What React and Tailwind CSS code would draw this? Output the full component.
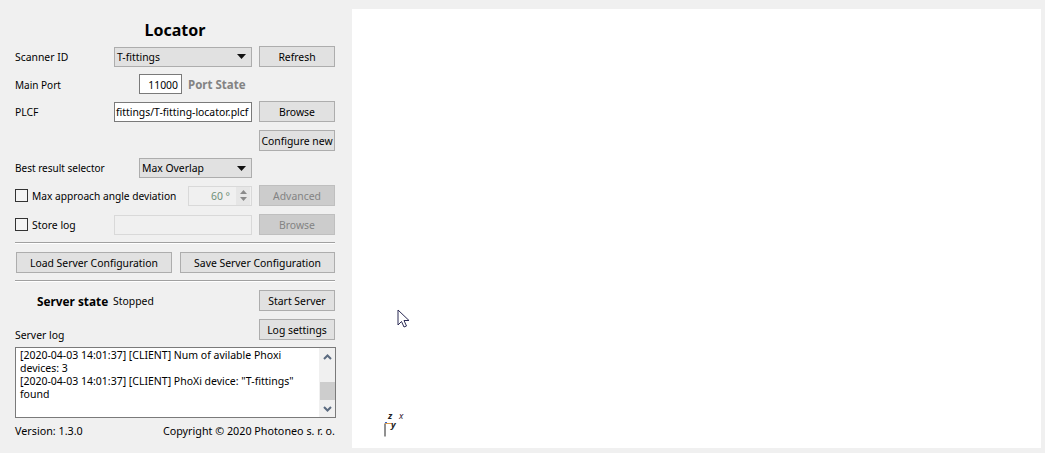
function Btn({ children, disabled, className = "w-[76px]" }) {
  return (
    <div className={`h-[21px] flex items-center justify-center border shrink-0 whitespace-nowrap ${className} ${disabled ? "bg-[#cccccc] border-[#bfbfbf] text-[#838383]" : "bg-[#e1e1e1] border-[#adadad] text-black"}`}>
      {children}
    </div>
  );
}

function Combo({ children, className }) {
  return (
    <div className={`h-[20px] flex items-center justify-between bg-[#e1e1e1] border border-[#adadad] pl-[2px] pr-[5px] shrink-0 ${className}`}>
      <span>{children}</span>
      <svg width="9" height="5" viewBox="0 0 9 5"><path d="M0 0h9L4.5 5z" fill="#111" /></svg>
    </div>
  );
}

function Check({ children, className }) {
  return (
    <div className={`flex items-center gap-[4px] shrink-0 whitespace-nowrap ${className}`}>
      <div className="w-[13px] h-[13px] border border-[#333333] bg-[#f4f4f4]" />
      <span>{children}</span>
    </div>
  );
}

function Sep({ className }) {
  return <div className={`h-[2px] w-[320px] border-t border-[#a0a0a0] bg-white ${className}`} />;
}

function Chevron({ up }) {
  return (
    <svg width="9" height="6" viewBox="0 0 9 6" fill="none" stroke="#5b6b80" strokeWidth="2">
      <path d={up ? "M1 5l3.5-3.5L8 5" : "M1 1l3.5 3.5L8 1"} />
    </svg>
  );
}

export default function App() {
  return (
    <div className="w-[1045px] h-[453px] bg-[#f0f0f0] flex overflow-hidden text-[10.4px] leading-[14px] text-black" style={{ fontFamily: '"Noto Sans", Tahoma, sans-serif' }}>
      <div className="w-[352px] shrink-0 pl-[15px] flex flex-col">
        <div className="h-[46px] w-[320px] pt-[20px] text-center text-[16px] leading-[20px] font-bold">Locator</div>

        <div className="flex items-center h-[21px] gap-[7px]">
          <span className="w-[92px]">Scanner ID</span>
          <Combo className="w-[138px]">T-fittings</Combo>
          <Btn>Refresh</Btn>
        </div>

        <div className="flex items-center h-[20px] mt-[7px]">
          <span className="w-[124px] pt-[1px] text-[10px]">Main Port</span>
          <div className="w-[43px] h-[20px] bg-white border border-[#7a7a7a] flex items-center justify-end pr-[3px] pt-[1px]">11000</div>
          <span className="ml-[6px] pt-[1px] font-bold text-[#838383] text-[11.5px]">Port State</span>
        </div>

        <div className="flex items-center h-[21px] mt-[7px] gap-[7px]">
          <span className="w-[92px]">PLCF</span>
          <div className="w-[138px] h-[20px] bg-white border border-[#7a7a7a] flex items-center pl-[1px] whitespace-nowrap">fittings/T-fitting-locator.plcf</div>
          <Btn>Browse</Btn>
        </div>

        <div className="flex mt-[8px] pl-[244px]">
          <Btn>Configure new</Btn>
        </div>

        <div className="flex items-center h-[20px] mt-[7px]">
          <span className="w-[124px] text-[10px]">Best result selector</span>
          <Combo className="w-[113px]">Max Overlap</Combo>
        </div>

        <div className="flex items-center h-[21px] mt-[7px] gap-[7px]">
          <Check className="w-[166px] text-[10.2px]">Max approach angle deviation</Check>
          <div className="w-[64px] h-[20px] border border-[#d9d9d9] flex items-center justify-end text-[#6f8f78] shrink-0">
            <span className="mr-[6px]">60 °</span>
            <div className="w-[14px] h-[18px] flex flex-col items-center justify-center gap-[3px] bg-[#e6e6e6] mr-[1px]">
              <svg width="7" height="4" viewBox="0 0 7 4"><path d="M3.5 0L7 4H0z" fill="#8a8a8a" /></svg>
              <svg width="7" height="4" viewBox="0 0 7 4"><path d="M0 0h7L3.5 4z" fill="#8a8a8a" /></svg>
            </div>
          </div>
          <Btn disabled>Advanced</Btn>
        </div>

        <div className="flex items-center h-[21px] mt-[8px] gap-[7px]">
          <Check className="w-[92px]">Store log</Check>
          <div className="w-[138px] h-[20px] border border-[#d9d9d9] bg-[#f0f0f0] shrink-0" />
          <Btn disabled>Browse</Btn>
        </div>

        <Sep className="mt-[7px]" />

        <div className="flex items-center mt-[8px] pl-[1px] gap-[8px]">
          <Btn className="w-[156px]">Load Server Configuration</Btn>
          <Btn className="w-[155px]">Save Server Configuration</Btn>
        </div>

        <Sep className="mt-[7px]" />

        <div className="flex items-center h-[21px] mt-[8px]">
          <span className="ml-[22px] w-[76px] font-bold text-[11.8px]">Server state</span>
          <span className="w-[146px]">Stopped</span>
          <Btn>Start Server</Btn>
        </div>

        <div className="flex items-end h-[21px] mt-[8px] justify-between w-[320px]">
          <span className="mb-[-2px]">Server log</span>
          <Btn>Log settings</Btn>
        </div>

        <div className="w-[321px] h-[71px] mt-[7px] bg-white border border-[#7a7a7a] flex text-[10.5px] leading-[13px]">
          <div className="flex-1 pl-[4px] pt-[1px] pr-[2px]">
            [2020-04-03 14:01:37] [CLIENT] Num of avilable Phoxi devices: 3<br />
            [2020-04-03 14:01:37] [CLIENT] PhoXi device: "T-fittings" found
          </div>
          <div className="w-[16px] bg-[#f0f0f0] flex flex-col items-center shrink-0">
            <div className="h-[17px] flex items-center justify-center"><Chevron up /></div>
            <div className="h-[17px]" />
            <div className="h-[18px] w-[15px] bg-[#cdcdcd]" />
            <div className="flex-1 flex items-center justify-center"><Chevron /></div>
          </div>
        </div>

        <div className="flex justify-between w-[320px] mt-[6px] text-[10.75px]">
          <span>Version: 1.3.0</span>
          <span>Copyright © 2020 Photoneo s. r. o.</span>
        </div>
      </div>

      <div className="relative w-[689px] h-[439px] mt-[9px] bg-white">
        <svg className="absolute left-[45px] top-[300px]" width="14" height="20" viewBox="0 0 14 20">
          <path d="M1 1v15l3.5-3.5 2.5 5.5 2.5-1-2.5-5.5H12z" fill="#fff" stroke="#2b2b55" strokeWidth="1" />
        </svg>
        <svg className="absolute left-[30px] top-[392px]" width="32" height="38" viewBox="0 0 32 38">
          <path d="M3 22.5v13" stroke="#222" />
          <path d="M3 22.5h7" stroke="#d99a4a" />
          <path d="M3 21.5h2" stroke="#3366cc" />
          <text x="6" y="18" fontSize="9" fontWeight="bold" fontStyle="italic" fill="#222">z</text>
          <text x="17" y="18" fontSize="9" fontStyle="italic" fill="#332233">x</text>
          <text x="9" y="27" fontSize="9" fontWeight="bold" fontStyle="italic" fill="#222">y</text>
        </svg>
      </div>
    </div>
  );
}
